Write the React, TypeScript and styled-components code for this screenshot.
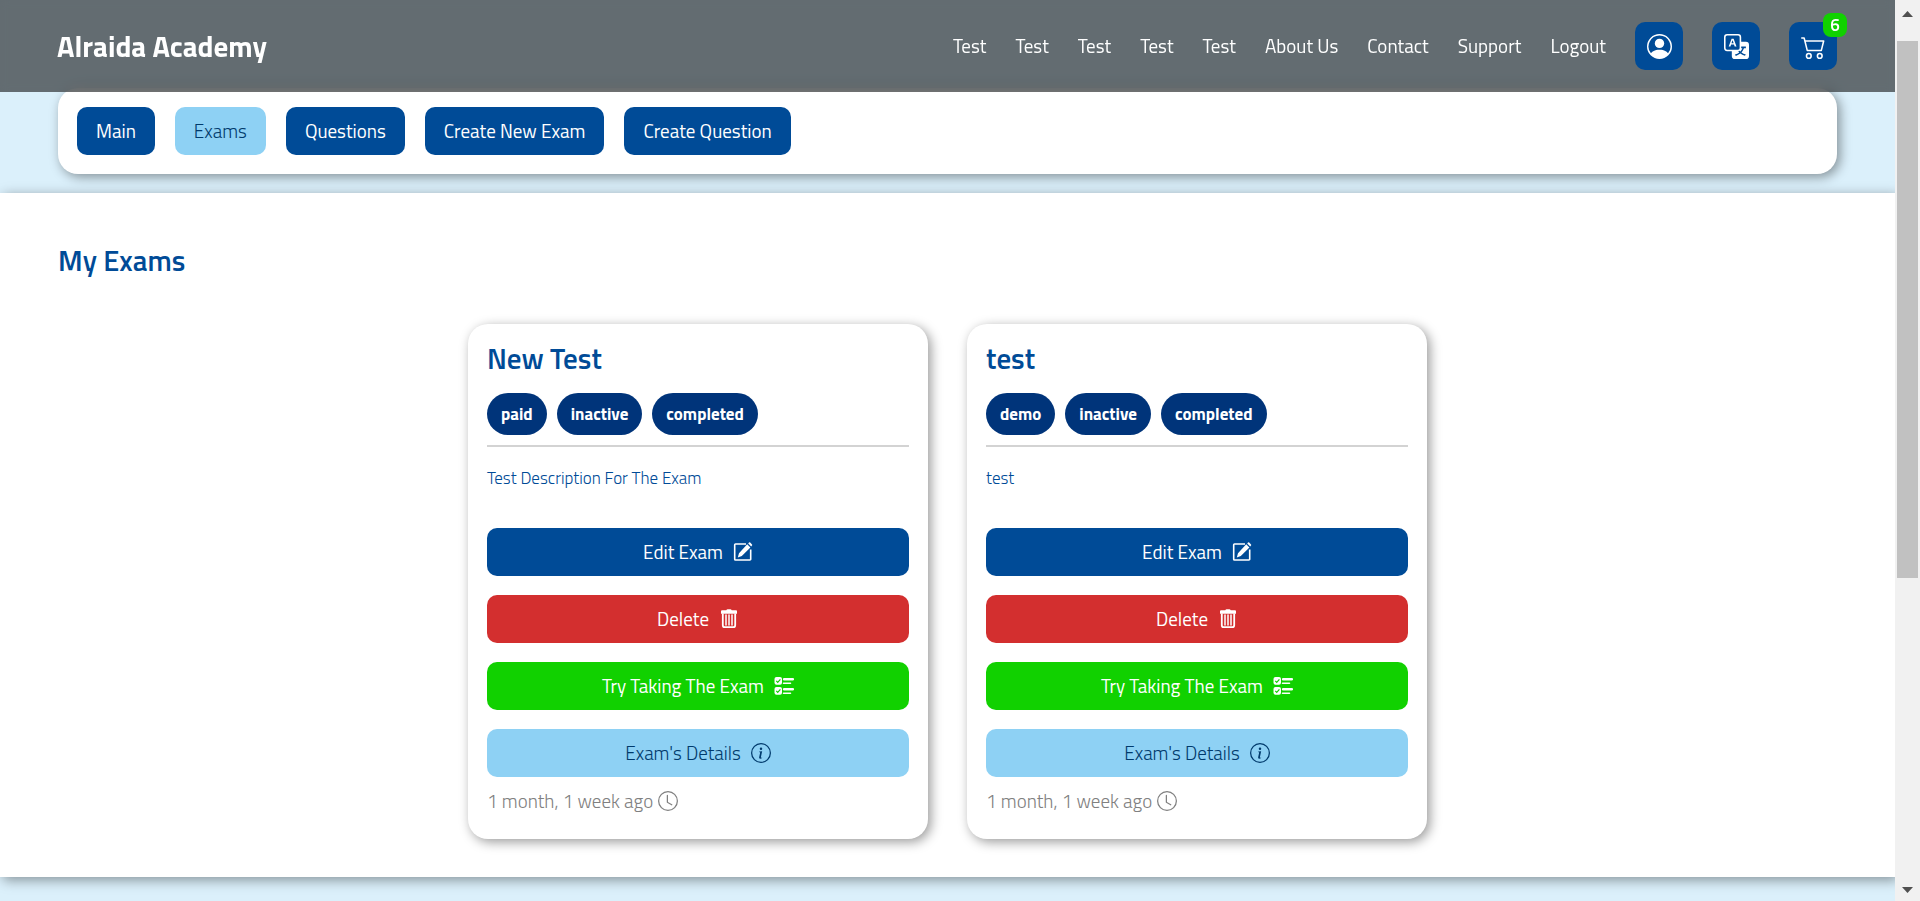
import React from "react";
import styled, { createGlobalStyle, css } from "styled-components";
import {
  BsPersonCircle,
  BsTranslate,
  BsCart2,
  BsInfoCircle,
  BsClock,
} from "react-icons/bs";

const GlobalStyle = createGlobalStyle`
  *, *::before, *::after { box-sizing: border-box; }
  body {
    margin: 0;
    background: #dbf0fb;
    font-family: "Titillium Web", Roboto, sans-serif;
    font-size: 19px;
    line-height: 28px;
  }
  h1, h2, p { margin: 0; }
  a { color: inherit; text-decoration: none; }
  button { font: inherit; border: 0; cursor: pointer; }
`;

const softShadow = "3px 3px 12px rgba(0, 0, 0, 0.4)";

const Shell = styled.div`
  display: flex;
  min-height: 100vh;
`;

const Page = styled.div`
  flex: 1;
  min-width: 0;
  overflow: clip;
`;

const Header = styled.header`
  position: sticky;
  top: 0;
  z-index: 2;
  display: flex;
  align-items: center;
  justify-content: space-between;
  height: 92px;
  padding: 0 58px 0 57px;
  background: rgba(0, 0, 0, 0.55);
  backdrop-filter: blur(4px);
  color: #fff;
`;

const Brand = styled.a`
  font-size: 29px;
  font-weight: 700;
`;

const Nav = styled.nav`
  display: flex;
  align-items: center;
  gap: 29px;
`;

const IconButton = styled.button`
  position: relative;
  display: grid;
  place-items: center;
  width: 48px;
  height: 48px;
  padding: 0;
  border-radius: 10px;
  background: #004b97;
  color: #fff;
`;

const Badge = styled.span`
  position: absolute;
  top: -9px;
  right: -10px;
  width: 24px;
  height: 24px;
  border-radius: 8px;
  background: #11d100;
  font-size: 17px;
  font-weight: 600;
  line-height: 24px;
`;

const TabPanel = styled.nav`
  display: flex;
  flex-wrap: wrap;
  gap: 20px;
  margin: -4px 58px 19px;
  padding: 19px;
  border-radius: 20px;
  background: #fff;
  box-shadow: ${softShadow};
`;

const tones = {
  primary: css`background: #004b97; color: #fff;`,
  danger: css`background: #d32f2f; color: #fff;`,
  success: css`background: #11d100; color: #fff;`,
  light: css`background: #8ed1f4; color: #003a6c; font-weight: 300;`,
};
type Tone = keyof typeof tones;

const Tab = styled.a<{ $tone: Tone }>`
  padding: 10px 19px;
  border-radius: 10px;
  ${({ $tone }) => tones[$tone]}
`;

const Main = styled.main`
  padding: 47px 58px 38px;
  background: #fff;
  box-shadow: ${softShadow};
`;

const Title = styled.h1`
  color: #004b97;
  font-size: 29px;
  line-height: 40px;
  font-weight: 600;
`;

const Cards = styled.div`
  display: flex;
  flex-wrap: wrap;
  justify-content: center;
  gap: 39px;
  margin-top: 44px;
`;

const Card = styled.article`
  display: flex;
  flex-direction: column;
  width: 460px;
  padding: 14px 19px 24px;
  border-radius: 20px;
  background: #fff;
  box-shadow: ${softShadow};
`;

const CardTitle = styled.h2`
  color: #004b97;
  font-size: 29px;
  line-height: 40px;
  font-weight: 600;
`;

const Tags = styled.div`
  display: flex;
  gap: 10px;
  margin-top: 15px;
  padding-bottom: 10px;
  border-bottom: 2px solid #d3d3d3;
`;

const Tag = styled.span`
  padding: 7px 14px;
  border-radius: 21px;
  background: #00347a;
  color: #fff;
  font-size: 17px;
  font-weight: 700;
`;

const Description = styled.p`
  margin: 17px 0 36px;
  color: #004b97;
  font-size: 17px;
  font-weight: 300;
`;

const Actions = styled.div`
  display: flex;
  flex-direction: column;
  gap: 19px;
`;

const Action = styled.button<{ $tone: Tone }>`
  display: flex;
  align-items: center;
  justify-content: center;
  gap: 10px;
  height: 48px;
  border-radius: 10px;
  ${({ $tone }) => tones[$tone]}
`;

const Age = styled.p`
  display: flex;
  align-items: center;
  gap: 5px;
  margin-top: 10px;
  color: #808080;
  font-weight: 300;
`;

const Scrollbar = styled.div`
  position: sticky;
  top: 0;
  display: flex;
  flex-direction: column;
  width: 25px;
  height: 100vh;
  padding: 11px 2px 8px;
  background: #f1f1f1;
`;

const Arrow = styled.svg`
  align-self: center;
  width: 11px;
  height: 6px;
  fill: #505050;
`;

const Track = styled.div`
  flex: 1;
  padding: 24px 0 20px;
`;

const Thumb = styled.div`
  height: 65%;
  background: #c1c1c1;
`;

const EditIcon = () => (
  <svg width="20" height="20" viewBox="0 0 20 20" fill="none" aria-hidden="true">
    <path d="M13 2H2.500a.8.8 0 0 0-.8.8v14.400a.8.8 0 0 0 .8.8h14.400a.8.8 0 0 0 .8-.8V7.500" stroke="currentColor" strokeWidth="1.600" />
    <path d="m14.200 2.200 3.200 3.200-8.600 8.600-4 1.400 1.200-4.200zM15.200 1.400l.8-.8q.6-.5 1.200 0l1.800 1.800q.5.600 0 1.200l-.8.800z" fill="currentColor" />
  </svg>
);

const TrashIcon = () => (
  <svg width="20" height="20" viewBox="0 0 20 20" fill="none" aria-hidden="true">
    <path d="M2 2.200q0-1 1-1h4.300q.4-1 1.300-1h2.800q.9 0 1.300 1H17q1 0 1 1v2.600H2z" fill="currentColor" />
    <path d="M3.800 4.500v11.700a2 2 0 0 0 2 2h8.400a2 2 0 0 0 2-2V4.500" stroke="currentColor" strokeWidth="1.800" />
    <path d="M7 6v10M10 6v10M13 6v10" stroke="currentColor" strokeWidth="1.500" strokeLinecap="round" />
  </svg>
);

const ChecklistIcon = () => (
  <svg width="20" height="20" viewBox="0 0 20 20" fill="none" stroke="currentColor" aria-hidden="true">
    {[1, 11].map((y) => (
      <g key={y} transform={`translate(0 ${y})`}>
        <rect x="0.500" y="0" width="7.500" height="7.800" rx="2" fill="currentColor" stroke="none" />
        <path d="m2.300 3.900 1.400 1.400 2.700-2.900" stroke="#11d100" strokeWidth="1.200" />
        <path d="M10.200 2.200h8.600" strokeWidth="2.600" strokeLinecap="round" />
        <path d="M9.500 6.200h7" strokeWidth="1.500" strokeLinecap="round" />
      </g>
    ))}
  </svg>
);

const links = ["Test", "Test", "Test", "Test", "Test", "About Us", "Contact", "Support", "Logout"];
const tabs = ["Main", "Exams", "Questions", "Create New Exam", "Create Question"];
const exams = [
  { title: "New Test", tags: ["paid", "inactive", "completed"], text: "Test Description For The Exam" },
  { title: "test", tags: ["demo", "inactive", "completed"], text: "test" },
];

export default function App() {
  return (
    <>
      <GlobalStyle />
      <Shell>
        <Page>
          <Header>
            <Brand href="#">Alraida Academy</Brand>
            <Nav aria-label="Site">
              {links.map((label, i) => (
                <a href="#" key={i}>{label}</a>
              ))}
              <IconButton aria-label="Account"><BsPersonCircle size={25} /></IconButton>
              <IconButton aria-label="Language"><BsTranslate size={25} /></IconButton>
              <IconButton aria-label="Cart">
                <BsCart2 size={25} />
                <Badge>6</Badge>
              </IconButton>
            </Nav>
          </Header>
          <TabPanel aria-label="Exams">
            {tabs.map((label) => (
              <Tab href="#" key={label} $tone={label === "Exams" ? "light" : "primary"}>{label}</Tab>
            ))}
          </TabPanel>
          <Main>
            <Title>My Exams</Title>
            <Cards>
              {exams.map((exam) => (
                <Card key={exam.title}>
                  <CardTitle>{exam.title}</CardTitle>
                  <Tags>
                    {exam.tags.map((tag) => <Tag key={tag}>{tag}</Tag>)}
                  </Tags>
                  <Description>{exam.text}</Description>
                  <Actions>
                    <Action $tone="primary">Edit Exam <EditIcon /></Action>
                    <Action $tone="danger">Delete <TrashIcon /></Action>
                    <Action $tone="success">Try Taking The Exam <ChecklistIcon /></Action>
                    <Action $tone="light">Exam's Details <BsInfoCircle size={20} /></Action>
                  </Actions>
                  <Age>1 month, 1 week ago <BsClock size={20} /></Age>
                </Card>
              ))}
            </Cards>
          </Main>
        </Page>
        <Scrollbar aria-hidden="true">
          <Arrow viewBox="0 0 11 6"><path d="M0 6 5.500 0 11 6z" /></Arrow>
          <Track><Thumb /></Track>
          <Arrow viewBox="0 0 11 6"><path d="M0 0h11L5.500 6z" /></Arrow>
        </Scrollbar>
      </Shell>
    </>
  );
}
